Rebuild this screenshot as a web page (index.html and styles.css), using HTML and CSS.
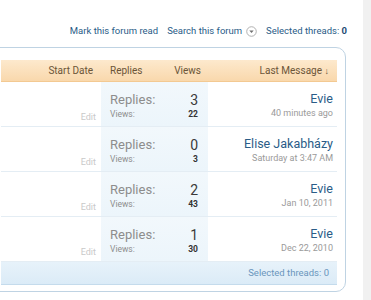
FILE: index.html
```html
<!DOCTYPE html>
<html lang="en">
<head>
  <meta charset="UTF-8" />
  <title>Forum threads</title>
  <link rel="stylesheet" href="styles.css">
</head>
<body>
  <div class="page">
    <div class="main">
      <div class="links">
        <a href="#">Mark this forum read</a>
        <a href="#" class="search">Search this forum
          <svg class="drop" viewBox="0 0 12 12"><circle cx="6" cy="6" r="5.2" fill="#fff" stroke="#a9a9a9" stroke-width="1"/><path d="M3.6 4.9h4.8L6 7.6z" fill="#6f6f6f"/></svg>
        </a>
        <a href="#">Selected threads: <b>0</b></a>
      </div>

      <div class="threads">
        <div class="head">
          <div class="col-main">Start Date</div>
          <div class="col-stats"><span>Replies</span><span>Views</span></div>
          <div class="col-last">Last Message <span class="arrow">&darr;</span></div>
        </div>

        <div class="thread">
          <div class="col-main"><span class="edit">Edit</span></div>
          <div class="col-stats">
            <div class="big"><span>Replies:</span><span class="num">3</span></div>
            <div class="small"><span>Views:</span><span class="num">22</span></div>
          </div>
          <div class="col-last"><a href="#" class="user">Evie</a><span class="date">40 minutes ago</span></div>
        </div>

        <div class="thread">
          <div class="col-main"><span class="edit">Edit</span></div>
          <div class="col-stats">
            <div class="big"><span>Replies:</span><span class="num">0</span></div>
            <div class="small"><span>Views:</span><span class="num">3</span></div>
          </div>
          <div class="col-last"><a href="#" class="user">Elise Jakabházy</a><span class="date">Saturday at 3:47 AM</span></div>
        </div>

        <div class="thread">
          <div class="col-main"><span class="edit">Edit</span></div>
          <div class="col-stats">
            <div class="big"><span>Replies:</span><span class="num">2</span></div>
            <div class="small"><span>Views:</span><span class="num">43</span></div>
          </div>
          <div class="col-last"><a href="#" class="user">Evie</a><span class="date">Jan 10, 2011</span></div>
        </div>

        <div class="thread">
          <div class="col-main"><span class="edit">Edit</span></div>
          <div class="col-stats">
            <div class="big"><span>Replies:</span><span class="num">1</span></div>
            <div class="small"><span>Views:</span><span class="num">30</span></div>
          </div>
          <div class="col-last"><a href="#" class="user">Evie</a><span class="date">Dec 22, 2010</span></div>
        </div>

        <div class="foot">Selected threads: 0</div>
      </div>
    </div>
    <div class="strip"></div>
  </div>
</body>
</html>
```

FILE: styles.css
```css
body {
  margin: 0;
  background: #fff;
  font-family: 'Trebuchet MS', Roboto, sans-serif;
  color: #333;
  overflow: hidden;
}
a { color: #2a5c87; text-decoration: none; }
.page { display: flex; min-height: 300px; }
.main { flex: 1; padding-right: 17px; min-width: 0; }
.strip { width: 8px; background: #f1f1f1; }

/* Top links */
.links {
  display: flex;
  justify-content: flex-end;
  align-items: center;
  gap: 9px;
  padding-top: 25px;
  height: 12px;
  line-height: 12px;
  font-size: 9.5px;
  margin-right: -1px;
}
.links b { color: #1f4d75; }
.search { display: flex; align-items: center; gap: 4px; }
.drop { width: 11px; height: 11px; }

/* Thread list */
.threads {
  margin-top: 10px;
  margin-left: -20px;
  border: 1px solid #bfd3e3;
  border-radius: 10px;
  padding: 12px 8px 6px 20px;
}
.head {
  display: flex;
  align-items: center;
  height: 22px;
  font-size: 10px;
  color: #6b5538;
  background: linear-gradient(#fde9cd, #f9d8ac);
  border-bottom: 1px solid #f3c992;
  box-sizing: border-box;
}
.head .arrow { font-size: 9px; }
.col-main { flex: 1; text-align: right; padding-right: 8px; }
.col-stats { width: 107px; box-sizing: border-box; padding: 0 8px 0 9px; }
.col-last { width: 129px; box-sizing: border-box; padding-right: 8px; text-align: right; }
.head .col-stats { display: flex; justify-content: space-between; padding-right: 7px; }

.thread {
  display: flex;
  height: 45px;
  border-bottom: 1px solid #e4edf4;
  box-sizing: border-box;
}
.thread .col-main { padding-top: 23px; padding-right: 5px; }
.edit { font-size: 9px; color: #c9c9c9; }
.thread .col-stats {
  background: linear-gradient(#f2f8fc, #ecf5fb);
  padding-top: 10px;
  padding-right: 10px;
}
.big, .small { display: flex; justify-content: space-between; color: #8d8d8d; }
.big { font-size: 13px; line-height: 16px; }
.big .num { color: #3a3a3a; font-size: 14px; }
.small { font-size: 8.5px; line-height: 12px; }
.small .num { color: #333; font-weight: bold; }
.thread .col-last { padding-top: 9px; padding-right: 4px; display: flex; flex-direction: column; align-items: flex-end; }
.user { font-size: 12.5px; line-height: 16px; }
.date { font-size: 9px; line-height: 12px; color: #9a9a9a; }

.foot {
  height: 23px;
  line-height: 22px;
  box-sizing: border-box;
  text-align: right;
  padding-right: 8px;
  font-size: 9.5px;
  color: #6a96bd;
  background: linear-gradient(#e7f2fa, #dbebf7);
  border-bottom: 1px solid #c4dbec;
}
```
